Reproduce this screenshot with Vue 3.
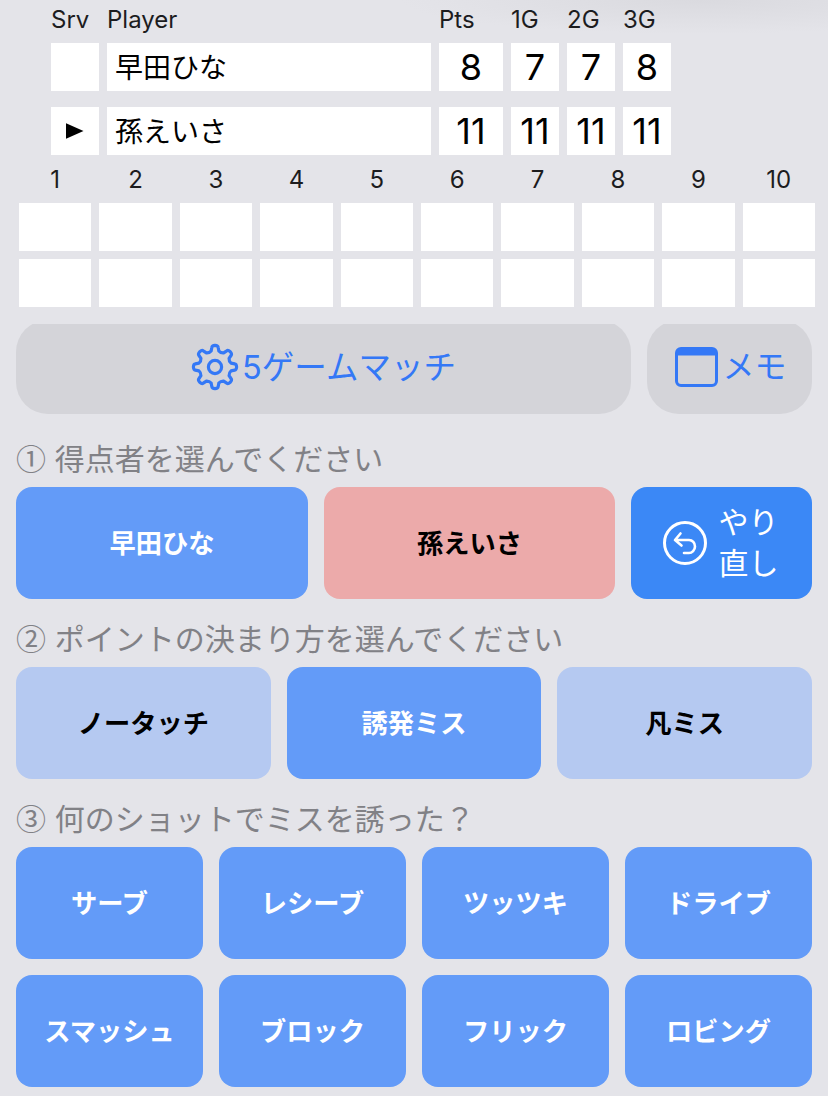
<script setup>
const players = [
  { name: '早田ひな', serving: false, pts: 8, games: [7, 7, 8] },
  { name: '孫えいさ', serving: true, pts: 11, games: [11, 11, 11] }
]
const rallyNumbers = [1, 2, 3, 4, 5, 6, 7, 8, 9, 10]
const pointTypes = [
  { label: 'ノータッチ', light: true },
  { label: '誘発ミス', light: false },
  { label: '凡ミス', light: true }
]
const shots = ['サーブ', 'レシーブ', 'ツッツキ', 'ドライブ', 'スマッシュ', 'ブロック', 'フリック', 'ロビング']

// gear outline, 8 teeth
const gearPath = (() => {
  const cx = 24, cy = 24, teeth = 8, outer = 21, inner = 15.5
  const step = (Math.PI * 2) / teeth
  const pt = (r, t) => `${(cx + r * Math.cos(t)).toFixed(2)} ${(cy + r * Math.sin(t)).toFixed(2)}`
  let d = ''
  for (let i = 0; i < teeth; i++) {
    const a = i * step - Math.PI / 2
    d += `${i === 0 ? 'M' : 'L'}${pt(inner + 1, a - step * 0.3)} `
    d += `L${pt(outer - 1, a - step * 0.2)} `
    d += `Q${pt(outer + 0.6, a - step * 0.17)} ${pt(outer + 0.6, a)} `
    d += `Q${pt(outer + 0.6, a + step * 0.17)} ${pt(outer - 1, a + step * 0.2)} `
    d += `L${pt(inner + 1, a + step * 0.3)} `
    d += `Q${pt(inner - 0.5, a + step * 0.5)} ${pt(inner + 1, a + step * 0.7)} `
  }
  return d + 'Z'
})()
</script>

<template>
  <div class="page">
    <div class="score-head">
      <span>Srv</span>
      <span>Player</span>
      <span>Pts</span>
      <span>1G</span>
      <span>2G</span>
      <span>3G</span>
    </div>
    <div v-for="p in players" :key="p.name" class="score-row">
      <div class="cell serve"><i v-if="p.serving" class="serve-mark"></i></div>
      <div class="cell name">{{ p.name }}</div>
      <div class="cell num">{{ p.pts }}</div>
      <div v-for="(g, i) in p.games" :key="i" class="cell num">{{ g }}</div>
    </div>

    <div class="rally-nums">
      <span v-for="n in rallyNumbers" :key="n">{{ n }}</span>
    </div>
    <div class="rally-cells">
      <div v-for="n in 20" :key="n" class="cell"></div>
    </div>

    <div class="top-actions">
      <div class="pill match">
        <svg viewBox="0 0 48 48" width="48" height="48" fill="none" stroke="currentColor" stroke-width="3.2" stroke-linejoin="round">
          <path :d="gearPath" />
          <circle cx="24" cy="24" r="6.6" />
        </svg>
        <span class="pill-text">5ゲームマッチ</span>
      </div>
      <div class="pill memo">
        <svg viewBox="0 0 43 40" width="43" height="40">
          <rect x="1.5" y="1.5" width="40" height="37" rx="4.5" fill="none" stroke="currentColor" stroke-width="3" />
          <path d="M1.5 8V6a4.5 4.5 0 0 1 4.5-4.5h31a4.5 4.5 0 0 1 4.5 4.5v2z" fill="currentColor" stroke="currentColor" />
        </svg>
        <span class="pill-text">メモ</span>
      </div>
    </div>

    <p class="section-label">① 得点者を選んでください</p>
    <div class="row-players">
      <button class="btn">早田ひな</button>
      <button class="btn pink">孫えいさ</button>
      <button class="btn undo">
        <svg viewBox="0 0 44 44" width="44" height="44" fill="none" stroke="currentColor" stroke-linecap="round" stroke-linejoin="round">
          <circle cx="22" cy="22" r="20.5" stroke-width="3" />
          <path d="M17.5 12.5L12 19l6.5 5.5M12.5 19H26c3.5 0 6 3 6 6.5S29 32 26 32h-5" stroke-width="2.6" />
        </svg>
        <span class="undo-text">やり<br />直し</span>
      </button>
    </div>

    <p class="section-label">② ポイントの決まり方を選んでください</p>
    <div class="row-three">
      <button v-for="t in pointTypes" :key="t.label" class="btn" :class="{ light: t.light }">{{ t.label }}</button>
    </div>

    <p class="section-label">③ 何のショットでミスを誘った？</p>
    <div class="row-four">
      <button v-for="s in shots" :key="s" class="btn">{{ s }}</button>
    </div>
  </div>
</template>

<style>
html,
body {
  margin: 0;
  background: #e4e4e9;
}
</style>

<style scoped>
.page {
  width: 828px;
  height: 1096px;
  overflow: hidden;
  background: radial-gradient(ellipse 300px 34px at 700px 0, #dadadf, rgba(228, 228, 233, 0)), #e4e4e9;
  color: #000;
  font-family: Inter, "Noto Sans CJK JP", sans-serif;
  box-sizing: border-box;
}

.score-head,
.score-row {
  display: grid;
  grid-template-columns: 48px 324px 64px 48px 48px 48px;
  column-gap: 8px;
  padding-left: 51px;
}

.score-head {
  height: 43px;
  font-size: 24px;
  line-height: 40px;
  color: #1c1c1e;
}

.score-row {
  height: 48px;
  margin-bottom: 16px;
}

.cell {
  background: #fff;
  height: 48px;
}

.serve {
  display: flex;
  align-items: center;
  justify-content: center;
}

.serve-mark {
  width: 18px;
  height: 16px;
  margin-left: -1px;
  background: #000;
  clip-path: polygon(0 0, 100% 50%, 0 100%);
}

.name {
  font-size: 28px;
  line-height: 50px;
  padding-left: 8px;
}

.num {
  font-size: 36px;
  line-height: 48px;
  text-align: center;
}

.rally-nums {
  display: grid;
  grid-template-columns: repeat(10, 1fr);
  column-gap: 8px;
  margin-top: -16px;
  height: 48px;
  padding: 0 13px 0 19px;
  font-size: 24px;
  line-height: 50px;
  text-align: center;
  color: #1c1c1e;
}

.rally-cells {
  display: grid;
  grid-template-columns: repeat(10, 1fr);
  gap: 8px;
  padding: 0 13px 0 19px;
}

.top-actions {
  display: flex;
  gap: 16px;
  height: 90px;
  padding: 0 16px;
  margin-top: 17px;
  overflow: hidden;
  align-items: flex-end;
}

.pill {
  height: 94px;
  flex-shrink: 0;
  border-radius: 32px;
  background: #d4d4d9;
  color: #3478f6;
  font-size: 32.5px;
  display: flex;
  align-items: center;
  justify-content: center;
}

.pill-text {
  margin-top: -6px;
}

.match {
  width: 615px;
  gap: 3px;
}

.memo {
  width: 165px;
  gap: 4px;
  padding-left: 3px;
  box-sizing: border-box;
  font-size: 32px;
}

.section-label {
  margin: 0;
  padding-left: 16px;
  height: 73px;
  box-sizing: border-box;
  font-family: "Noto Sans CJK JP", sans-serif;
  font-size: 30px;
  line-height: 86px;
  word-spacing: 2px;
  color: #818186;
  white-space: nowrap;
}

.row-players + .section-label,
.row-three + .section-label {
  height: 68px;
  line-height: 76px;
}

.btn {
  border: 0;
  margin: 0;
  padding: 0 0 3px;
  height: 112px;
  border-radius: 16px;
  background: #639bf8;
  color: #fff;
  font-family: inherit;
  font-size: 26.25px;
  font-weight: 700;
}

.btn.pink {
  background: #ecaaaa;
  color: #000;
}

.btn.light {
  background: #b5c9f1;
  color: #000;
}

.row-players,
.row-three,
.row-four {
  display: grid;
  gap: 16px;
  padding: 0 16px;
}

.row-players {
  grid-template-columns: 292px 291px 181px;
}

.row-three {
  grid-template-columns: repeat(3, 1fr);
}

.row-four {
  grid-template-columns: repeat(4, 1fr);
}

.undo {
  background: #3b88f6;
  display: flex;
  align-items: center;
  justify-content: center;
  gap: 12px;
  padding: 0 2px 0 0;
}

.undo-text {
  font-size: 30px;
  font-weight: 400;
  line-height: 41px;
  text-align: left;
}
</style>
